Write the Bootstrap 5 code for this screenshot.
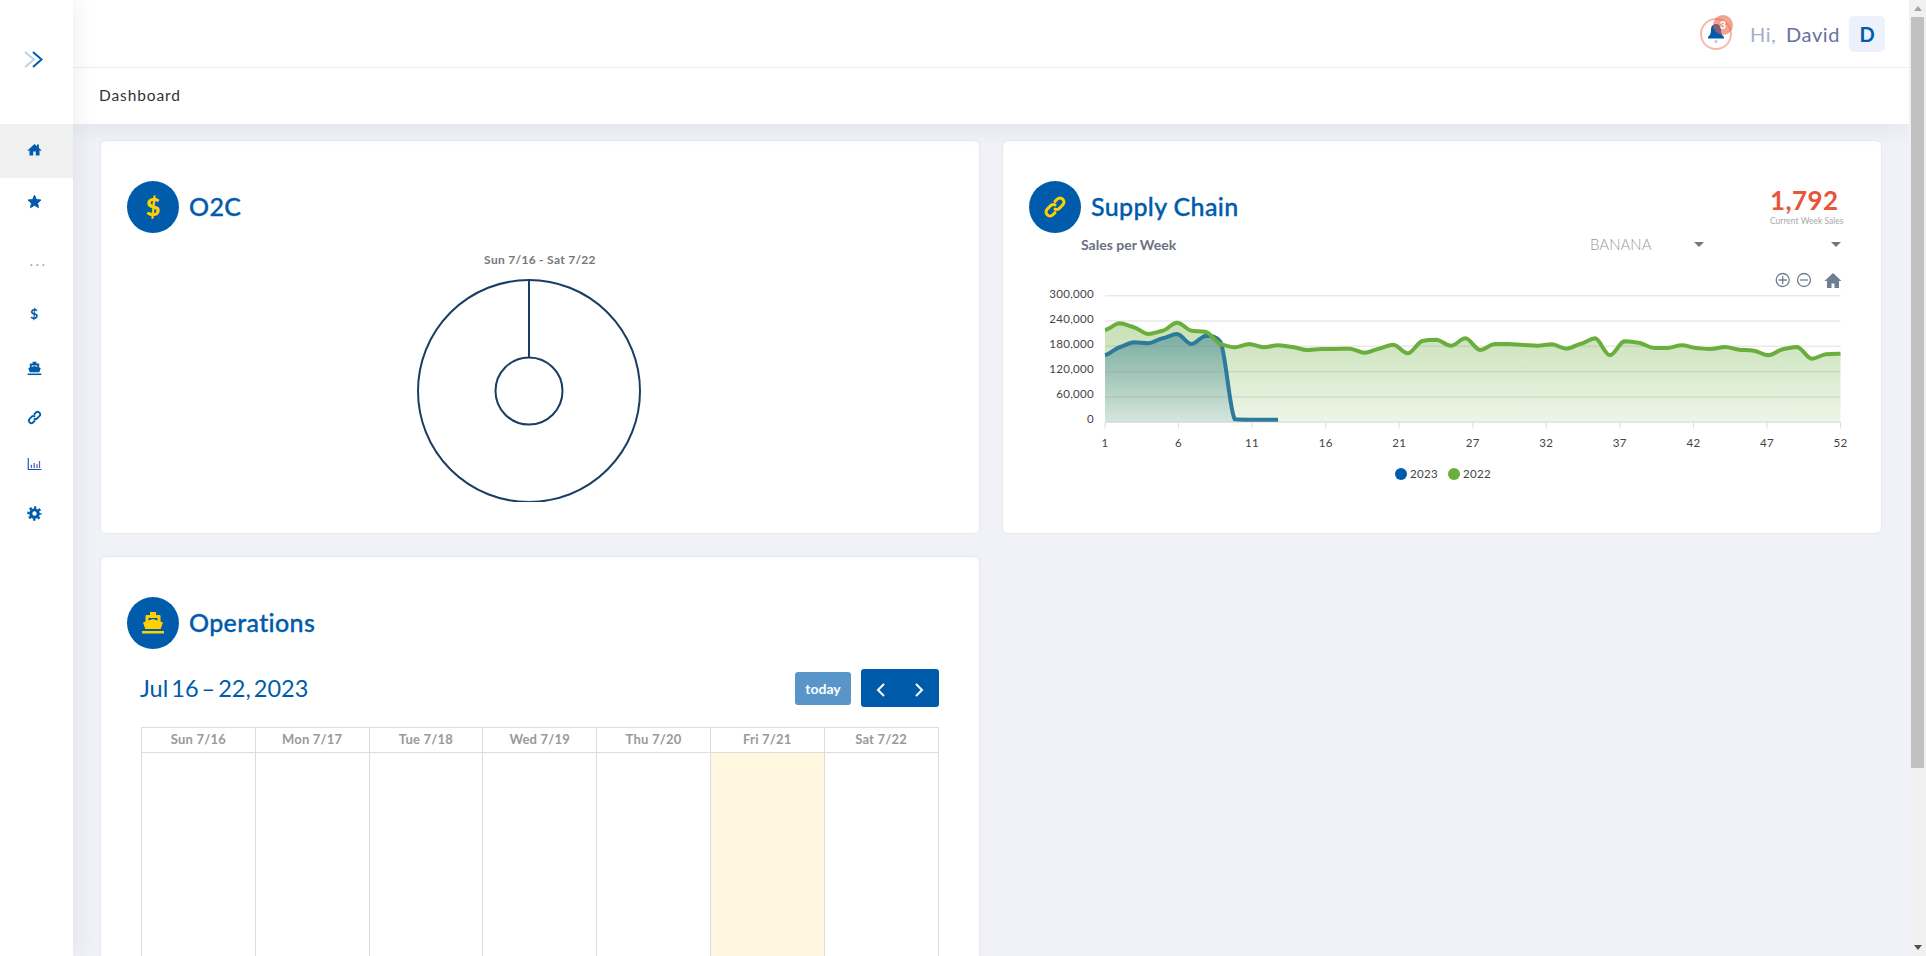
<!DOCTYPE html>
<html>
<head>
    <title>Dashboard</title>
    <link href="https://cdn.jsdelivr.net/npm/bootstrap@5.3.0/dist/css/bootstrap.min.css" rel="stylesheet">
    <style>
        html, body { height: 100%; overflow: hidden; }
        body { font-family: "Lato", "Liberation Sans", sans-serif; background: #f0f2f7; color: #333; }
        .app-shell { height: 956px; }

        .side-bar { width: 73px; flex: none; background: #fff; position: relative; z-index: 3; box-shadow: 0 0 28px rgba(40, 45, 90, .09); }
        .side-top { height: 124px; padding: 51px 0 0 24px; }
        .side-top svg { display: block; }
        .side-item { height: 46px; display: flex; align-items: center; justify-content: center; color: #005cab; padding-right: 5px; }
        .side-item svg { width: 15px; height: 15px; }
        .side-home { height: 54px; background: #f0f0f1; padding-bottom: 3px; }
        .side-dots { margin-top: 17px; color: #9aa5c9; font-size: 15px; letter-spacing: 2.5px; padding: 0 0 8px 4px; }
        .side-dollar { margin-top: 3px; font-size: 14px; font-weight: 700; }
        .side-ship { margin-top: 9px; }
        .side-link { margin-top: 3px; }
        .side-gear { margin-top: 4px; }

        .main-col { min-width: 0; }
        .head-wrap { position: relative; z-index: 2; background: #fff; box-shadow: 0 0 26px rgba(40, 45, 90, .09); }
        .top-bar { height: 68px; border-bottom: 1px solid #eceef2; padding-right: 24px; }
        .crumb-bar { height: 56px; padding: 0 0 0 26px; font-size: 15.5px; letter-spacing: .9px; color: #333; }
        .bell-wrap { width: 32px; height: 32px; border: 2px solid #f6b9a9; border-radius: 50%; position: relative; margin-right: 18px; }
        .bell-wrap svg { width: 18px; height: 20px; position: absolute; left: 5px; top: 3px; color: #005cab; }
        .bell-dot { position: absolute; width: 20px; height: 20px; border-radius: 50%; background: rgba(232, 96, 66, .58); color: #fff; font-size: 11px; font-weight: 700; line-height: 19px; text-align: center; left: 11px; top: -5px; }
        .hi-text { font-size: 20px; letter-spacing: .6px; color: #a4aec9; margin-right: 9px; }
        .hi-text span { color: #69729a; margin-left: 4px; }
        .user-chip { width: 36px; height: 36px; background: #ecf1fc; border-radius: 5px; color: #005cab; font-size: 20px; font-weight: 700; }

        .scroll-rail { width: 17px; flex: none; background: #f1f1f1; position: relative; z-index: 4; }
        .rail-arrow { height: 17px; }
        .rail-arrow::before { content: ""; border: 4px solid transparent; border-top: 0; border-bottom: 5px solid #a3a3a3; }
        .rail-down::before { border-bottom: 0; border-top: 5px solid #505050; }
        .rail-thumb { height: 751px; background: #c1c1c1; margin: 0 2px; }

        .dash-area { display: grid; grid-template-columns: 1fr 1fr; column-gap: 22px; row-gap: 22px; padding: 16px 27px 0; align-items: start; overflow: hidden; min-height: 0; }
        .dash-card { border: 1px solid #e7e9ee; border-radius: 6px; padding: 40px 26px 0; background: #fff; }
        .top-card { height: 394px; }
        .round-badge { width: 52px; height: 52px; border-radius: 50%; background: #005cab; color: #fdd000; flex: none; font-size: 25px; font-weight: 900; }
        .round-badge svg { width: 24px; height: 24px; }
        .card-head { font-size: 25px; font-weight: 500; color: #005cab; margin: 0 0 2px 10px; letter-spacing: .35px; -webkit-text-stroke: .35px #005cab; }

        .donut-caption { font-size: 12px; font-weight: 700; color: #777; text-align: center; margin-top: 19px; letter-spacing: .3px; line-height: 15px; }
        .donut-box { width: 226px; display: block; margin: 12px 0 0 289px; }

        .stat-box { margin: 4px 0 0 0; width: 85px; white-space: nowrap; }
        .stat-num { font-size: 26px; font-weight: 700; color: #e8553a; line-height: 30px; letter-spacing: .4px; }
        .stat-note { font-size: 8.5px; color: #aaa; white-space: nowrap; line-height: 11px; margin-top: 1px; }
        .filter-row { margin-top: 2px; height: 18px; font-size: 14px; }
        .filter-title { font-weight: 700; color: #6b6f80; margin-left: 52px; }
        .filter-pick { color: #999; font-size: 15px; font-weight: 300; }
        .filter-one { position: absolute; left: 561px; width: 114px; }
        .filter-two { position: absolute; left: 802px; }
        .filter-caret { border: 5px solid transparent; border-bottom: 0; border-top: 5px solid #777; display: inline-block; }
        .chart-svg { display: block; margin-top: 11px; }
        .chart-svg text { font-family: "Lato", "Liberation Sans", sans-serif; font-size: 11.5px; fill: #444; letter-spacing: .3px; }

        .cal-tools { margin: 20px 14px 20px 13px; height: 38px; }
        .cal-title { font-size: 23.5px; color: #005cab; margin: 0; font-weight: 400; word-spacing: -3px; }
        .btn-today { background: #5a95ca; color: #fff; border: 0; border-radius: 3px; height: 33px; width: 56px; padding: 0; font-size: 14px; font-weight: 700; margin-right: 10px; }
        .btn-pager { background: #005cab; color: #fff; border: 0; width: 39.5px; height: 38px; padding: 0; }
        .btn-pager:first-child { border-radius: 3px 0 0 3px; }
        .btn-pager:last-child { border-radius: 0 3px 3px 0; }
        .btn-pager svg { width: 10px; height: 14px; }
        .cal-grid { width: 797.500px; margin: 0 0 0 14px; table-layout: fixed; border-color: #ddd; }
        .cal-grid th { font-size: 13px; font-weight: 700; color: #999; text-align: center; height: 25px; padding: 0; vertical-align: middle; letter-spacing: .2px; }
        .cal-grid td { height: 420px; padding: 0; }
        .cal-grid td.cal-today { --bs-table-bg: #fff7e0; background: #fff7e0; }
    </style>
</head>
<body>
    <svg width="0" height="0" class="position-absolute">
        <symbol id="ic-home" viewBox="0 0 24 24"><path fill="currentColor" d="M12 3 1 13.2l1.3 1.3L4 13v8.500h6V15h4v6.500h6V13l1.700 1.500 1.300-1.300L19 9.500V4h-3v2.700z"/></symbol>
        <symbol id="ic-star" viewBox="0 0 24 24"><path fill="currentColor" stroke="currentColor" stroke-width="1.500" stroke-linejoin="round" d="m12 2 3 6.800 7.300.8-5.400 5 1.500 7.200L12 18.100l-6.400 3.700 1.500-7.200-5.400-5 7.300-.8z"/></symbol>
        <symbol id="ic-ship" viewBox="0 0 24 24"><path fill="currentColor" fill-rule="evenodd" d="M9 1h6v3h3.500a1 1 0 0 1 1 1v5.500l2.500 1-2.300 6.500H4.300L2 11.500l2.500-1V5a1 1 0 0 1 1-1H9zM7.500 7v2.500L12 8l4.500 1.500V7z"/><path fill="currentColor" d="M1 20h22v2.500H1z"/></symbol>
        <symbol id="ic-link" viewBox="0 0 24 24"><g transform="rotate(-45 12 12)" fill="none" stroke="currentColor" stroke-width="3" stroke-linecap="round"><path d="M13.500 10.500A4 4 0 0 0 10.500 8H5a4 4 0 0 0 0 8h3"/><path d="M10.500 13.500a4 4 0 0 0 3 2.500H19a4 4 0 0 0 0-8h-3"/></g></symbol>
        <symbol id="ic-bars" viewBox="0 0 24 24"><path fill="none" stroke="currentColor" stroke-width="1.800" d="M2 3v18.500h21"/><path fill="none" stroke="#5a5fb0" stroke-width="2" d="M7 19v-5M11.500 19v-8M16 19v-6M20 19V8"/></symbol>
        <symbol id="ic-gear" viewBox="0 0 24 24"><circle cx="12" cy="12" r="6" fill="none" stroke="currentColor" stroke-width="5"/><circle cx="12" cy="12" r="9.500" fill="none" stroke="currentColor" stroke-width="4" stroke-dasharray="3.730 3.730" stroke-dashoffset="1.860"/></symbol>
    </svg>

    <div class="app-shell d-flex">
        <nav class="side-bar">
            <div class="side-top">
                <svg width="20" height="18" viewBox="0 0 20 18" fill="none" stroke-width="2"><path stroke="#b9d3ea" d="m1 1 9 7.500-9 7.500"/><path stroke="#005cab" d="m9 1 8.500 7.500L9 16"/></svg>
            </div>
            <div class="side-item side-home"><svg><use href="#ic-home"/></svg></div>
            <div class="side-item"><svg><use href="#ic-star"/></svg></div>
            <div class="side-item side-dots">...</div>
            <div class="side-item side-dollar">$</div>
            <div class="side-item side-ship"><svg><use href="#ic-ship"/></svg></div>
            <div class="side-item side-link"><svg><use href="#ic-link"/></svg></div>
            <div class="side-item"><svg><use href="#ic-bars"/></svg></div>
            <div class="side-item side-gear"><svg><use href="#ic-gear"/></svg></div>
        </nav>

        <div class="main-col flex-grow-1 d-flex flex-column">
            <header class="head-wrap">
                <div class="top-bar d-flex align-items-center justify-content-end">
                    <div class="bell-wrap">
                        <svg viewBox="0 0 18 20"><path fill="currentColor" d="M9 1c-3 0-5 2.300-5 5.500 0 4-.8 5.500-3 7.500v1.500h16V14c-2.200-2-3-3.500-3-7.500C14 3.300 12 1 9 1z"/><circle cx="9" cy="18.500" r="1.500" fill="#a9cdea"/></svg>
                        <div class="bell-dot">3</div>
                    </div>
                    <div class="hi-text">Hi, <span>David</span></div>
                    <div class="user-chip d-flex align-items-center justify-content-center">D</div>
                </div>
                <div class="crumb-bar d-flex align-items-center">Dashboard</div>
            </header>

            <main class="dash-area flex-grow-1">
                <section class="card dash-card top-card">
                    <div class="d-flex align-items-center">
                        <div class="round-badge d-flex align-items-center justify-content-center">$</div>
                        <h2 class="card-head">O2C</h2>
                    </div>
                    <div class="donut-caption">Sun 7/16 - Sat 7/22</div>
                    <svg class="donut-box" width="226" height="223" viewBox="0 0 226 223" fill="none" stroke="#1a3d63" stroke-width="2">
                        <circle cx="113" cy="112" r="111"/>
                        <circle cx="113" cy="112" r="33.500"/>
                        <path d="M113 1v77.500"/>
                    </svg>
                </section>

                <section class="card dash-card top-card">
                    <div class="d-flex justify-content-between align-items-start">
                        <div class="d-flex align-items-center">
                            <div class="round-badge d-flex align-items-center justify-content-center"><svg><use href="#ic-link"/></svg></div>
                            <h2 class="card-head">Supply Chain</h2>
                        </div>
                        <div class="stat-box">
                            <div class="stat-num">1,792</div>
                            <div class="stat-note">Current Week Sales</div>
                        </div>
                    </div>
                    <div class="filter-row d-flex align-items-center position-relative">
                        <span class="filter-title">Sales per Week</span>
                        <span class="filter-one d-flex align-items-center justify-content-between"><span class="filter-pick">BANANA</span><i class="filter-caret"></i></span>
                        <span class="filter-two d-flex"><i class="filter-caret"></i></span>
                    </div>
                    <svg class="chart-svg" id="sales-chart" width="826" height="228" viewBox="1029 264 826 228"></svg>
                </section>

                <section class="card dash-card cal-card">
                    <div class="d-flex align-items-center">
                        <div class="round-badge d-flex align-items-center justify-content-center"><svg><use href="#ic-ship"/></svg></div>
                        <h2 class="card-head">Operations</h2>
                    </div>
                    <div class="cal-tools d-flex align-items-center justify-content-between">
                        <h3 class="cal-title">Jul 16 – 22, 2023</h3>
                        <div class="d-flex align-items-center">
                            <button class="btn btn-today">today</button>
                            <div class="btn-group">
                                <button class="btn btn-pager"><svg viewBox="0 0 10 14" fill="none" stroke="#fff" stroke-width="2"><path d="M8 1 2 7l6 6"/></svg></button>
                                <button class="btn btn-pager"><svg viewBox="0 0 10 14" fill="none" stroke="#fff" stroke-width="2"><path d="m2 1 6 6-6 6"/></svg></button>
                            </div>
                        </div>
                    </div>
                    <table class="table table-bordered cal-grid">
                        <thead>
                            <tr><th>Sun 7/16</th><th>Mon 7/17</th><th>Tue 7/18</th><th>Wed 7/19</th><th>Thu 7/20</th><th>Fri 7/21</th><th>Sat 7/22</th></tr>
                        </thead>
                        <tbody>
                            <tr><td></td><td></td><td></td><td></td><td></td><td class="cal-today"></td><td></td></tr>
                        </tbody>
                    </table>
                </section>
            </main>
        </div>

        <div class="scroll-rail d-flex flex-column">
            <div class="rail-arrow d-flex align-items-center justify-content-center"></div>
            <div class="rail-thumb"></div>
            <div class="flex-grow-1"></div>
            <div class="rail-arrow rail-down d-flex align-items-center justify-content-center"></div>
        </div>
    </div>

    <script>
        // y values read off the chart in page pixels
        const green2022 = [330,323.3,327.3,334,330.7,322.7,330.7,332,344,347.3,344,347.3,345.3,347,350,349,349,348.7,352.7,348.7,344.7,353.3,341,339.7,345.7,338.3,350,344,344,345,345.7,344.3,348.7,343.7,338.3,355.3,341.3,342.7,347.7,348,345.3,348,349,347,349.7,350.7,355.3,349.3,347,358.7,354.3,353.7];
        const blue2023 = [355,347.3,342.3,343.3,338.3,334,344,335.7,341.7,419.3,419.7,419.7,419.7];
        const x0 = 1105, xEnd = 1840.5, yTop = 295.7, yBase = 422.3;
        const stepX = (xEnd - x0) / 51;
        const chart = document.getElementById('sales-chart');

        // light curve through the points, control points stay between the two ends so nothing overshoots
        const linePath = (vals) => {
            const k = 0.1;
            const keep = (v, a, b) => Math.min(Math.max(v, Math.min(a, b)), Math.max(a, b));
            let d = `M${x0} ${vals[0]}`;
            for (let i = 0; i < vals.length - 1; i++) {
                const prev = vals[Math.max(i - 1, 0)], next = vals[Math.min(i + 2, vals.length - 1)];
                const xa = x0 + i * stepX, xb = xa + stepX;
                const c1 = keep(vals[i] + (vals[i + 1] - prev) * k, vals[i], vals[i + 1]);
                const c2 = keep(vals[i + 1] - (next - vals[i]) * k, vals[i], vals[i + 1]);
                d += ` C${(xa + stepX * .35).toFixed(1)} ${c1.toFixed(1)} ${(xb - stepX * .35).toFixed(1)} ${c2.toFixed(1)} ${xb.toFixed(1)} ${vals[i + 1]}`;
            }
            return d;
        };
        const areaPath = (vals) => linePath(vals) + ` L${(x0 + (vals.length - 1) * stepX).toFixed(1)} ${yBase} L${x0} ${yBase} Z`;

        let out = `<defs>
            <linearGradient id="fill-green" x1="0" y1="0" x2="0" y2="1"><stop offset="0" stop-color="#6aaf3d" stop-opacity=".38"/><stop offset="1" stop-color="#6aaf3d" stop-opacity=".12"/></linearGradient>
            <linearGradient id="fill-blue" x1="0" y1="0" x2="0" y2="1"><stop offset="0" stop-color="#0d6480" stop-opacity=".42"/><stop offset="1" stop-color="#0d6480" stop-opacity=".1"/></linearGradient>
        </defs>`;

        out += `<path d="${areaPath(green2022)}" fill="url(#fill-green)"/>`;
        out += `<path d="${areaPath(blue2023.slice(0, 10))}" fill="url(#fill-blue)"/>`;

        ['300,000','240,000','180,000','120,000','60,000','0'].forEach((label, i) => {
            const y = yTop + i * (yBase - yTop) / 5;
            out += `<path d="M${x0} ${y.toFixed(1)}H${xEnd}" stroke="#8a8a8a" stroke-opacity=".2" stroke-width="1.500"/>`;
            out += `<text x="1094" y="${(298 + i * 25.07).toFixed(1)}" text-anchor="end">${label}</text>`;
        });

        ['1','6','11','16','21','27','32','37','42','47','52'].forEach((label, i) => {
            const x = x0 + i * (xEnd - x0) / 10;
            out += `<path d="M${x.toFixed(1)} ${yBase}v6" stroke="#ddd"/>`;
            out += `<text x="${x.toFixed(1)}" y="447" text-anchor="middle">${label}</text>`;
        });

        out += `<path d="${linePath(blue2023)}" fill="none" stroke="#2e7a9c" stroke-width="4" stroke-linejoin="round"/>`;
        out += `<path d="${linePath(green2022)}" fill="none" stroke="#6aaf3d" stroke-width="4" stroke-linejoin="round"/>`;

        // legend
        out += `<circle cx="1401" cy="474" r="6" fill="#005cab"/><text x="1410" y="478">2023</text>`;
        out += `<circle cx="1454" cy="474" r="6" fill="#6aaf3d"/><text x="1463" y="478">2022</text>`;

        // zoom tools
        out += `<g fill="none" stroke="#6e7f93" stroke-width="1.300"><circle cx="1782.700" cy="280" r="6.500"/><path d="M1782.700 276v8M1778.700 280h8"/><circle cx="1804" cy="280" r="6.500"/><path d="M1800 280h8"/></g>`;
        out += `<path d="M1833 273l-8.500 8h2.500v7h4.500v-4.500h3v4.500h4.500v-7h2.500z" fill="#6e7f93"/>`;

        chart.innerHTML = out;
    </script>
</body>
</html>
